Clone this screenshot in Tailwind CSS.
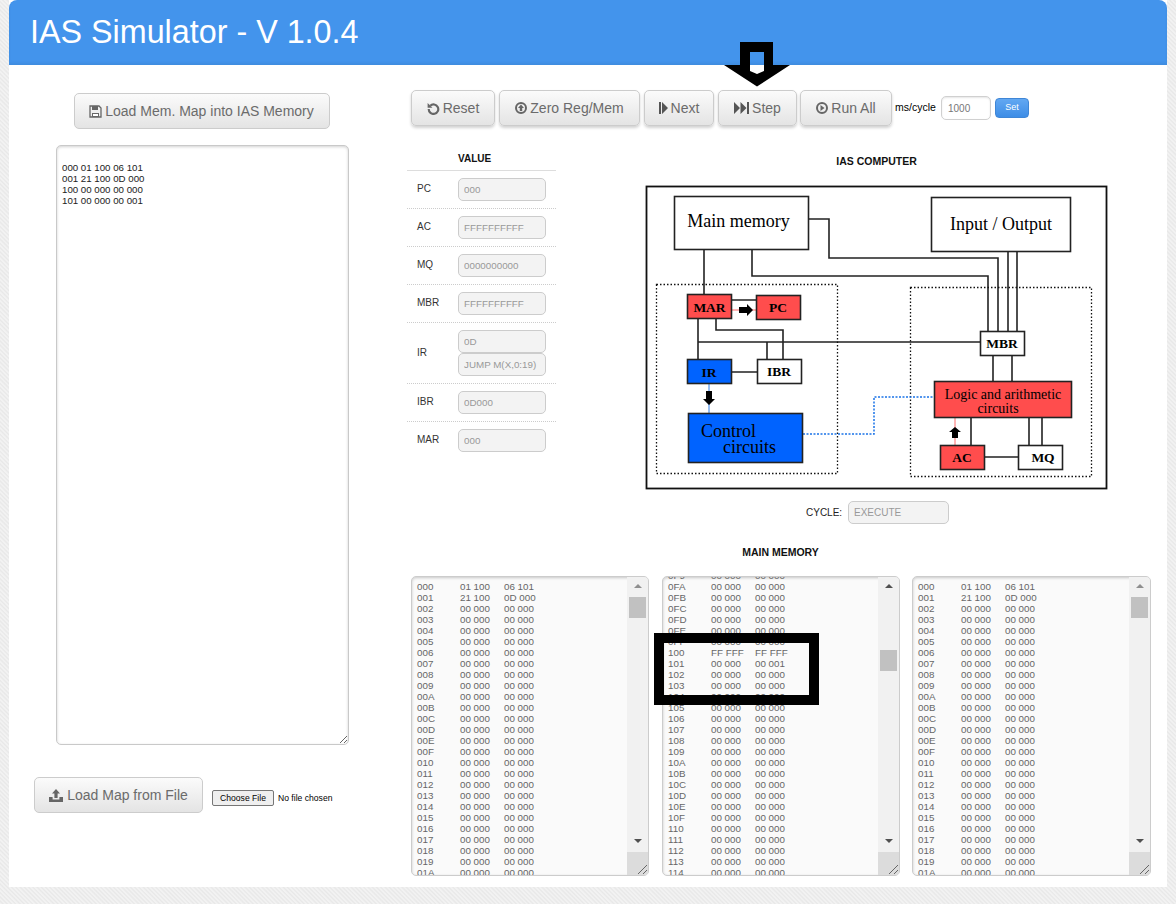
<!DOCTYPE html>
<html lang="en">
<head>
    <meta charset="UTF-8">
    <title>IAS Simulator</title>
    <script src="https://cdn.jsdelivr.net/npm/@tailwindcss/browser@4"></script>
</head>
<body class="bg-[#eeeeee] font-['Liberation_Sans',Arial,sans-serif] overflow-hidden">
<div class="relative w-[1176px] h-[904px] pl-[9px] bg-[repeating-linear-gradient(45deg,#f2f2f2_0px,#f2f2f2_1px,#e8e8e8_2px,#ededed_3px)]">
    <main class="relative w-[1158px] h-[887px] bg-white">
        <!-- Title bar -->
        <header class="h-[65px] bg-[#4394ec] rounded-t-[8px] pl-[21px] pt-[11px] shadow-[inset_0_-2px_3px_rgba(0,0,0,0.06)]">
            <h1 class="text-[32.3px] leading-[42px] text-white">IAS Simulator - V 1.0.4</h1>
        </header>

        <div class="flex">
            <!-- Left column: memory map -->
            <section class="w-[398px] shrink-0 pt-[28px]">
                <div class="flex flex-col items-center pr-[11px]">
                    <button class="w-[256px] h-[36px] -ml-[2px] flex items-center justify-center gap-[3px] rounded-[5px] border border-[#cccccc] bg-gradient-to-b from-[#fbfbfb] to-[#e4e4e4] text-[14px] text-[#6b6b6b]">
                        <svg class="w-[13px] h-[13px]" viewBox="0 0 13 13"><path fill="none" stroke="#666" stroke-width="1.3" d="M1 1h9l2 2v9H1z"/><path fill="#666" d="M3 1h6v4H3zM3 8h7v4H3z"/><path fill="#fff" d="M4 9h5v2H4z"/></svg>
                        Load Mem. Map into IAS Memory
                    </button>
                    <textarea readonly class="block w-[293px] h-[600px] mt-[16px] px-[5px] pt-[16px] border border-[#c9c9c9] rounded-[5px] bg-white shadow-[inset_0_1px_3px_rgba(0,0,0,0.18)] text-[9.7px] leading-[11px] text-[#222] outline-none">000 01 100 06 101
001 21 100 0D 000
100 00 000 00 000
101 00 000 00 001</textarea>
                </div>
                <div class="flex items-center mt-[32px] ml-[25px]">
                    <button class="w-[169px] h-[36px] flex items-center justify-center gap-[4px] rounded-[5px] border border-[#cccccc] bg-gradient-to-b from-[#fbfbfb] to-[#e4e4e4] text-[14px] text-[#6b6b6b]">
                        <svg class="w-[14px] h-[13px]" viewBox="0 0 14 13"><path fill="#666" d="M7 0l4 4.5H8.600V9H5.400V4.500H3zM0 8h3.600v2.600h6.800V8H14v5H0z"/></svg>
                        Load Map from File
                    </button>
                    <input type="file" class="ml-[9px] mt-[6px] w-[150px] text-[8.6px] text-black file:mr-[4px] file:h-[16px] file:w-[62px] file:border file:border-[#767676] file:rounded-[2px] file:bg-[#efefef]">
                </div>
            </section>

            <!-- Right column: controls, registers, diagram, memory -->
            <section class="flex-1 pt-[25px]">
                <div class="flex items-center ml-[4px] h-[36px]">
                    <button class="w-[84px] h-[36px] flex items-center justify-center gap-[3px] rounded-[5px] border border-[#cccccc] bg-gradient-to-b from-[#fbfbfb] to-[#e4e4e4] shadow-[0_2px_3px_rgba(0,0,0,0.18)] text-[14px] text-[#6b6b6b]">
                        <svg class="w-[13px] h-[13px]" viewBox="0 0 12 12"><path fill="none" stroke="#666" stroke-width="2" d="M3 3.400A4.400 4.400 0 1 1 1.600 6.500"/><path fill="#666" d="M0.600 1v4.400H5z"/></svg>
                        Reset
                    </button>
                    <button class="w-[141px] h-[36px] ml-[4px] flex items-center justify-center gap-[3px] rounded-[5px] border border-[#cccccc] bg-gradient-to-b from-[#fbfbfb] to-[#e4e4e4] shadow-[0_2px_3px_rgba(0,0,0,0.18)] text-[14px] text-[#6b6b6b]">
                        <svg class="w-[12px] h-[12px]" viewBox="0 0 12 12"><circle cx="6" cy="6" r="5" fill="none" stroke="#666" stroke-width="2"/><path fill="#666" d="M6 2.600L9 6H7.200v3H4.800V6H3z"/></svg>
                        Zero Reg/Mem
                    </button>
                    <button class="w-[70px] h-[36px] ml-[4px] flex items-center justify-center gap-[3px] rounded-[5px] border border-[#cccccc] bg-gradient-to-b from-[#fbfbfb] to-[#e4e4e4] shadow-[0_2px_3px_rgba(0,0,0,0.18)] text-[14px] text-[#6b6b6b]">
                        <svg class="w-[9px] h-[12px]" viewBox="0 0 9 12"><path fill="#555" d="M0 0h2v12H0zM3 0l6 6-6 6z"/></svg>
                        Next
                    </button>
                    <button class="w-[79px] h-[36px] ml-[4px] flex items-center justify-center gap-[3px] rounded-[5px] border border-[#cccccc] bg-gradient-to-b from-[#fbfbfb] to-[#e4e4e4] shadow-[0_2px_3px_rgba(0,0,0,0.18)] text-[14px] text-[#6b6b6b]">
                        <svg class="w-[15px] h-[12px]" viewBox="0 0 15 12"><path fill="#555" d="M0 0l6 6-6 6zM6.500 0l6 6-6 6zM13 0h2v12h-2z"/></svg>
                        Step
                    </button>
                    <button class="w-[92px] h-[36px] ml-[3px] flex items-center justify-center gap-[3px] rounded-[5px] border border-[#cccccc] bg-gradient-to-b from-[#fbfbfb] to-[#e4e4e4] shadow-[0_2px_3px_rgba(0,0,0,0.18)] text-[14px] text-[#6b6b6b]">
                        <svg class="w-[12px] h-[12px]" viewBox="0 0 12 12"><circle cx="6" cy="6" r="5" fill="none" stroke="#666" stroke-width="2"/><path fill="#666" d="M4.500 3l4 3-4 3z"/></svg>
                        Run All
                    </button>
                    <span class="w-[46px] ml-[3px] text-[10.5px] text-black whitespace-nowrap">ms/cycle</span>
                    <input value="1000" class="w-[50px] h-[24px] pl-[6px] border border-[#d0d0d0] rounded-[5px] shadow-[inset_0_1px_2px_rgba(0,0,0,0.1)] text-[10px] text-[#777] outline-none">
                    <button class="w-[34px] h-[20px] ml-[4px] rounded-[4px] border border-[#3f86d6] bg-gradient-to-b from-[#62a8f2] to-[#3d8de6] text-[9px] text-white">Set</button>
                </div>

                <div class="flex mt-[23px]">
                    <!-- Registers -->
                    <div class="w-[149px] shrink-0">
                        <div class="h-[22px] pl-[51px] border-b border-[#dddddd] text-[10px] leading-[20px] font-bold text-[#111]">VALUE</div>
                        <div class="h-[38px] flex pt-[7px] border-b border-dotted border-[#cccccc]">
                            <span class="w-[51px] pl-[10px] text-[10px] leading-[22px] text-[#333]">PC</span>
                            <input disabled value="000" class="w-[88px] h-[23px] pl-[5px] border border-[#cccccc] rounded-[5px] bg-[#f3f3f3] text-[9.8px] text-[#999]">
                        </div>
                        <div class="h-[38px] flex pt-[7px] border-b border-dotted border-[#cccccc]">
                            <span class="w-[51px] pl-[10px] text-[10px] leading-[22px] text-[#333]">AC</span>
                            <input disabled value="FFFFFFFFFF" class="w-[88px] h-[23px] pl-[5px] border border-[#cccccc] rounded-[5px] bg-[#f3f3f3] text-[9.8px] text-[#999]">
                        </div>
                        <div class="h-[38px] flex pt-[7px] border-b border-dotted border-[#cccccc]">
                            <span class="w-[51px] pl-[10px] text-[10px] leading-[22px] text-[#333]">MQ</span>
                            <input disabled value="0000000000" class="w-[88px] h-[23px] pl-[5px] border border-[#cccccc] rounded-[5px] bg-[#f3f3f3] text-[9.8px] text-[#999]">
                        </div>
                        <div class="h-[38px] flex pt-[7px] border-b border-dotted border-[#cccccc]">
                            <span class="w-[51px] pl-[10px] text-[10px] leading-[22px] text-[#333]">MBR</span>
                            <input disabled value="FFFFFFFFFF" class="w-[88px] h-[23px] pl-[5px] border border-[#cccccc] rounded-[5px] bg-[#f3f3f3] text-[9.8px] text-[#999]">
                        </div>
                        <div class="h-[61px] flex items-start pt-[7px] border-b border-dotted border-[#cccccc]">
                            <span class="w-[51px] pl-[10px] text-[10px] leading-[46px] text-[#333]">IR</span>
                            <div class="w-[88px]">
                                <input disabled value="0D" class="block w-[88px] h-[23px] pl-[5px] border border-[#cccccc] rounded-[5px] bg-[#f3f3f3] text-[9.8px] text-[#999]">
                                <input disabled value="JUMP M(X,0:19)" class="block w-[88px] h-[23px] pl-[5px] border border-[#cccccc] rounded-[5px] bg-[#f3f3f3] text-[9.8px] text-[#999]">
                            </div>
                        </div>
                        <div class="h-[38px] flex pt-[7px] border-b border-dotted border-[#cccccc]">
                            <span class="w-[51px] pl-[10px] text-[10px] leading-[22px] text-[#333]">IBR</span>
                            <input disabled value="0D000" class="w-[88px] h-[23px] pl-[5px] border border-[#cccccc] rounded-[5px] bg-[#f3f3f3] text-[9.8px] text-[#999]">
                        </div>
                        <div class="h-[38px] flex pt-[7px]">
                            <span class="w-[51px] pl-[10px] text-[10px] leading-[22px] text-[#333]">MAR</span>
                            <input disabled value="000" class="w-[88px] h-[23px] pl-[5px] border border-[#cccccc] rounded-[5px] bg-[#f3f3f3] text-[9.8px] text-[#999]">
                        </div>
                    </div>

                    <!-- Diagram -->
                    <div class="w-[480px] ml-[84px] -mt-[1px]">
                        <h2 class="h-[32px] text-center text-[10.5px] leading-[26px] font-bold text-[#111] -ml-[7px]">IAS COMPUTER</h2>
                        <svg class="block" width="480" height="315" viewBox="640 180 480 315" font-family="'Liberation Serif',serif">
                            <g fill="none" stroke="#111" stroke-width="1.8">
                                <rect x="646.500" y="186.500" width="460" height="302"/>
                                <path stroke="#222" stroke-width="1.6" d="M808 219h21v39h169v73M752 249v27h236v55M1008 251v80M1017 251v80M704 249v45"/>
                                <path stroke="#222" stroke-width="1.6" d="M732 300h24M698 318v41M716 318v12h67v29M698 342h282M767 342v17M732 372h25M993 355v26M1012 355v26M971 418v27M985 457h33M1029 418v27M1042 418v27"/>
                                <rect x="656.500" y="284.500" width="181" height="189" stroke-width="1.300" stroke-dasharray="1.500 2"/>
                                <rect x="910.500" y="287.500" width="181" height="189" stroke-width="1.300" stroke-dasharray="1.500 2"/>
                                <path stroke="#ff6b6b" stroke-width="1" d="M732 310h24M955 418v27"/>
                                <path stroke="#2f7fe8" stroke-width="1" d="M709 384v29"/>
                                <path stroke="#1a73e8" stroke-width="1.500" stroke-dasharray="2 1.500" d="M803 434h71v-37h60"/>
                            </g>
                            <g stroke="#222" stroke-width="1.600">
                                <rect x="674.500" y="196.500" width="134" height="53" fill="#fff"/>
                                <rect x="931.500" y="197.500" width="139" height="54" fill="#fff"/>
                                <rect x="687.500" y="294.500" width="44" height="24" fill="#ff4d4d"/>
                                <rect x="756.500" y="295.500" width="44" height="24" fill="#ff4d4d"/>
                                <rect x="687.500" y="359.500" width="44" height="24" fill="#0063ff"/>
                                <rect x="757.500" y="359.500" width="44" height="24" fill="#fff"/>
                                <rect x="688.500" y="413.500" width="114" height="49" fill="#0063ff"/>
                                <rect x="980.500" y="331.500" width="44" height="24" fill="#fff"/>
                                <rect x="934.500" y="381.500" width="137" height="36" fill="#ff4d4d"/>
                                <rect x="940.500" y="445.500" width="44" height="24" fill="#ff4d4d"/>
                                <rect x="1018.500" y="445.500" width="44" height="24" fill="#fff"/>
                            </g>
                            <path fill="#000" d="M739 307h8v-3l6 6-6 6v-3h-8zM706 391h6v8h3l-6 6-6-6h3zM952 438v-6h-3l6-5 6 5h-3v6z"/>
                            <g fill="#000" text-anchor="middle">
                                <text x="738.500" y="227" font-size="18">Main memory</text>
                                <text x="1001" y="230" font-size="18">Input / Output</text>
                                <text x="709.500" y="312" font-size="13.500" font-weight="bold">MAR</text>
                                <text x="778" y="312" font-size="13.500" font-weight="bold">PC</text>
                                <text x="709" y="377" font-size="13.500" font-weight="bold">IR</text>
                                <text x="779" y="376" font-size="13.500" font-weight="bold">IBR</text>
                                <text x="1002" y="348" font-size="13.500" font-weight="bold">MBR</text>
                                <text x="1003" y="399" font-size="14">Logic and arithmetic</text>
                                <text x="998" y="413" font-size="14">circuits</text>
                                <text x="962" y="462" font-size="13.500" font-weight="bold">AC</text>
                                <text x="1043" y="462" font-size="13.500" font-weight="bold">MQ</text>
                            </g>
                            <text x="701" y="437" font-size="18">Control</text>
                            <text x="723" y="453" font-size="18">circuits</text>
                        </svg>
                        <div class="flex items-center h-[23px] mt-[6px] ml-[166px]">
                            <span class="w-[42px] text-[10px] text-[#222]">CYCLE:</span>
                            <input disabled value="EXECUTE" class="w-[101px] h-[23px] pl-[5px] border border-[#cccccc] rounded-[5px] bg-[#f3f3f3] text-[10px] text-[#999]">
                        </div>
                    </div>
                </div>

                <!-- Main memory -->
                <h2 class="h-[24px] mt-[17px] ml-[4px] w-[739px] text-center text-[10.5px] leading-[22px] font-bold text-[#111]">MAIN MEMORY</h2>
                <div class="flex ml-[4px] mt-[11px]">
                    <div class="w-[238px] h-[300px] flex overflow-hidden border border-[#cccccc] rounded-[5px] bg-[#fafafa] shadow-[inset_0_1px_3px_rgba(0,0,0,0.2)]">
                        <div id="memA" class="flex-1 pl-[5px] pt-[4px] min-w-0"></div>
                        <div class="w-[21px] flex flex-col items-center bg-[#f1f1f1]">
                            <div class="h-[20px] pt-[7px]"><div class="w-0 h-0 border-x-[4px] border-x-transparent border-b-[4px] border-b-[#8f8f8f]"></div></div>
                            <div class="w-[17px] h-[21px] bg-[#c1c1c1]"></div>
                            <div class="mt-auto mb-[9px] w-0 h-0 border-x-[4px] border-x-transparent border-t-[4px] border-t-[#505050]"></div>
                            <div class="w-[21px] h-[23px] bg-[#dcdcdc] flex items-end justify-end"><svg width="11" height="11" viewBox="0 0 11 11"><path stroke="#666" fill="none" d="M1 10L10 1M6 10l4-4"/></svg></div>
                        </div>
                    </div>
                    <div class="w-[238px] h-[300px] ml-[13px] flex overflow-hidden border border-[#cccccc] rounded-[5px] bg-[#fafafa] shadow-[inset_0_1px_3px_rgba(0,0,0,0.2)]">
                        <div id="memB" class="flex-1 pl-[5px] pt-[4px] -mt-[11px] min-w-0"></div>
                        <div class="w-[21px] flex flex-col items-center bg-[#f1f1f1]">
                            <div class="h-[20px] pt-[7px]"><div class="w-0 h-0 border-x-[4px] border-x-transparent border-b-[4px] border-b-[#505050]"></div></div>
                            <div class="w-[17px] h-[21px] mt-[53px] bg-[#c1c1c1]"></div>
                            <div class="mt-auto mb-[9px] w-0 h-0 border-x-[4px] border-x-transparent border-t-[4px] border-t-[#505050]"></div>
                            <div class="w-[21px] h-[23px] bg-[#dcdcdc] flex items-end justify-end"><svg width="11" height="11" viewBox="0 0 11 11"><path stroke="#666" fill="none" d="M1 10L10 1M6 10l4-4"/></svg></div>
                        </div>
                    </div>
                    <div class="w-[239px] h-[300px] ml-[12px] flex overflow-hidden border border-[#cccccc] rounded-[5px] bg-[#fafafa] shadow-[inset_0_1px_3px_rgba(0,0,0,0.2)]">
                        <div id="memC" class="flex-1 pl-[5px] pt-[4px] min-w-0"></div>
                        <div class="w-[21px] flex flex-col items-center bg-[#f1f1f1]">
                            <div class="h-[20px] pt-[7px]"><div class="w-0 h-0 border-x-[4px] border-x-transparent border-b-[4px] border-b-[#8f8f8f]"></div></div>
                            <div class="w-[17px] h-[21px] bg-[#c1c1c1]"></div>
                            <div class="mt-auto mb-[9px] w-0 h-0 border-x-[4px] border-x-transparent border-t-[4px] border-t-[#505050]"></div>
                            <div class="w-[21px] h-[23px] bg-[#dcdcdc] flex items-end justify-end"><svg width="11" height="11" viewBox="0 0 11 11"><path stroke="#666" fill="none" d="M1 10L10 1M6 10l4-4"/></svg></div>
                        </div>
                    </div>
                </div>
            </section>
        </div>

        <!-- Annotations drawn over the screenshot -->
        <svg class="absolute left-[715px] top-[42px] pointer-events-none" width="66" height="45" viewBox="0 0 66 45">
            <path fill="#000" fill-rule="evenodd" d="M16 0h33v23h17L33 44.500 0 23h16zM26 10v19l7 3 7-3V10z"/>
        </svg>
        <div class="absolute left-[645px] top-[633px] w-[165px] h-[72px] border-[10px] border-black pointer-events-none"></div>
    </main>
</div>

<script>
    // Fill the three memory panes
    function hex3(n) {
        return n.toString(16).toUpperCase().padStart(3, '0');
    }

    const special = {
        0x000: ['01 100', '06 101'],
        0x001: ['21 100', '0D 000'],
    };
    const specialB = {
        0x100: ['FF FFF', 'FF FFF'],
        0x101: ['00 000', '00 001'],
    };

    function fill(id, start, values) {
        const pane = document.getElementById(id);
        for (let i = 0; i < 28; i++) {
            const addr = start + i;
            const val = values[addr] || ['00 000', '00 000'];
            const row = document.createElement('div');
            row.className = 'flex h-[11px] text-[9.8px] leading-[11px] text-[#666] whitespace-nowrap';
            row.innerHTML = `<span class="w-[43px]">${hex3(addr)}</span><span class="w-[44px]">${val[0]}</span><span>${val[1]}</span>`;
            pane.appendChild(row);
        }
    }

    fill('memA', 0x000, special);
    fill('memB', 0x0F9, specialB);
    fill('memC', 0x000, special);
</script>
</body>
</html>
